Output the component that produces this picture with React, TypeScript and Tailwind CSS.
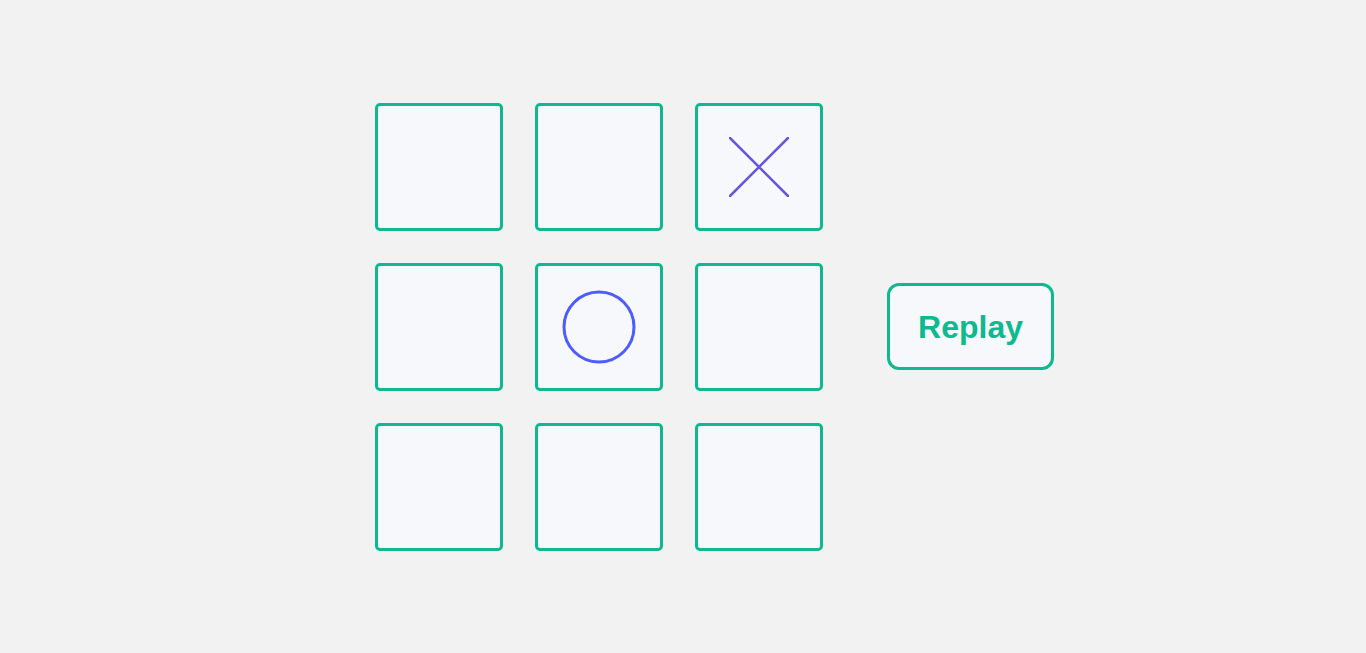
export default function App() {
  const cells = ["", "", "x", "", "o", "", "", "", ""];

  return (
    <div className="min-h-screen w-full bg-[#f2f2f2] flex items-center pl-[375px] font-['Liberation_Sans',Arial,sans-serif]">
      <div className="grid grid-cols-3 gap-8">
        {cells.map((c, i) => (
          <div
            key={i}
            className="w-32 h-32 border-[3px] border-[#0fb88f] rounded-[5px] bg-[#f7f8fc] flex items-center justify-center"
          >
            {c === "x" && (
              <svg width="60" height="60" viewBox="0 0 60 60">
                <path d="M1 1 L59 59 M59 1 L1 59" stroke="#6557d8" strokeWidth="2.5" strokeLinecap="round" />
              </svg>
            )}
            {c === "o" && (
              <svg width="76" height="76" viewBox="0 0 76 76">
                <circle cx="38" cy="38" r="35" fill="none" stroke="#4c5cff" strokeWidth="3" />
              </svg>
            )}
          </div>
        ))}
      </div>
      <button className="ml-16 w-[167px] h-[87px] border-[3px] border-[#0fb88f] rounded-xl bg-[#f7f8fc] text-[#0fb88f] text-[32px] font-bold">
        Replay
      </button>
    </div>
  );
}
